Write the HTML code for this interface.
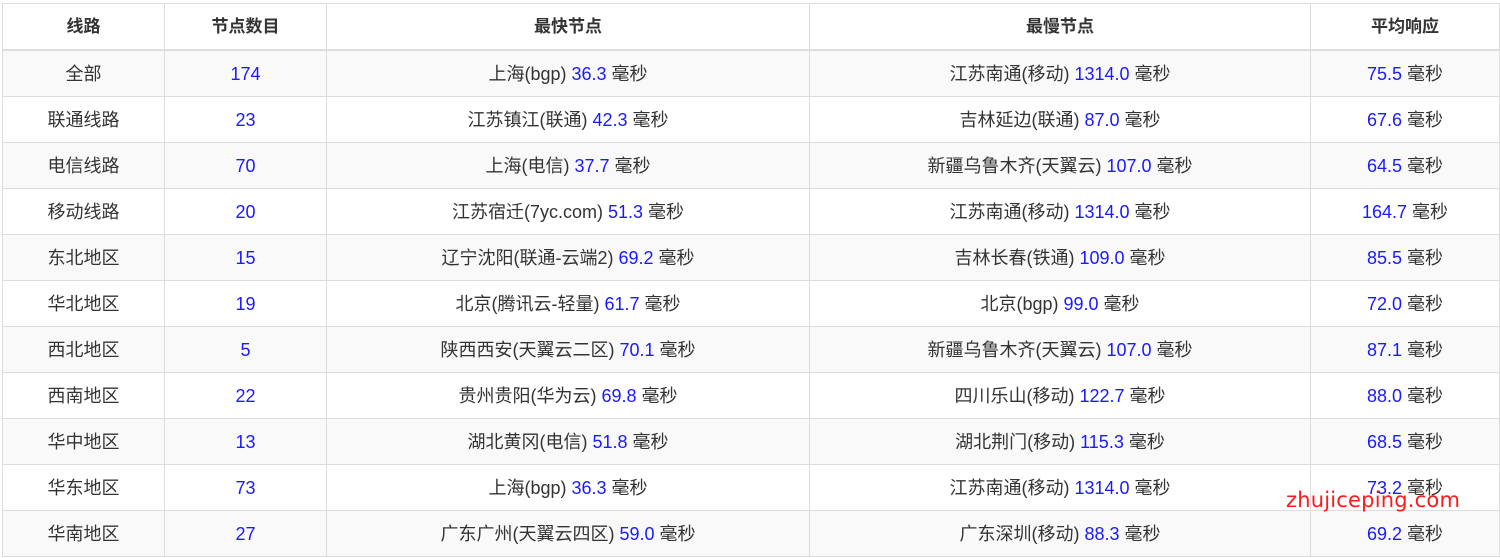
<!DOCTYPE html>
<html><head><meta charset="utf-8"><style>
body{margin:0;background:#fff;width:1500px;height:558px;overflow:hidden;position:relative;font-family:"Liberation Sans","Noto Sans CJK SC",sans-serif;}
table{position:absolute;left:2px;top:3px;border-collapse:collapse;table-layout:fixed;width:1497px;font-size:18px;color:#333;}
td,th{border:1px solid #ddd;text-align:center;height:45px;padding:0;line-height:20px;vertical-align:middle;}
th{font-weight:bold;height:45px;border-bottom:2px solid #ddd;font-size:17px;}
tr:nth-child(even) td{background:#f9f9f9;}
b{font-weight:normal;color:#1a1aff;line-height:20px;vertical-align:baseline;}
td>b:only-child{display:inline-block;padding-top:1px;}
.wm{position:absolute;left:1286px;top:488px;color:#ff1a1a;font-size:21px;font-family:"DejaVu Sans",sans-serif;letter-spacing:0.2px;}
</style></head><body>
<table>
<colgroup><col style="width:162px"><col style="width:162px"><col style="width:483px"><col style="width:501px"><col style="width:189px"></colgroup>
<tr><th>线路</th><th>节点数目</th><th>最快节点</th><th>最慢节点</th><th>平均响应</th></tr>
<tr><td>全部</td><td><b>174</b></td><td>上海(bgp) <b>36.3</b> 毫秒</td><td>江苏南通(移动) <b>1314.0</b> 毫秒</td><td><b>75.5</b> 毫秒</td></tr>
<tr><td>联通线路</td><td><b>23</b></td><td>江苏镇江(联通) <b>42.3</b> 毫秒</td><td>吉林延边(联通) <b>87.0</b> 毫秒</td><td><b>67.6</b> 毫秒</td></tr>
<tr><td>电信线路</td><td><b>70</b></td><td>上海(电信) <b>37.7</b> 毫秒</td><td>新疆乌鲁木齐(天翼云) <b>107.0</b> 毫秒</td><td><b>64.5</b> 毫秒</td></tr>
<tr><td>移动线路</td><td><b>20</b></td><td>江苏宿迁(7yc.com) <b>51.3</b> 毫秒</td><td>江苏南通(移动) <b>1314.0</b> 毫秒</td><td><b>164.7</b> 毫秒</td></tr>
<tr><td>东北地区</td><td><b>15</b></td><td>辽宁沈阳(联通-云端2) <b>69.2</b> 毫秒</td><td>吉林长春(铁通) <b>109.0</b> 毫秒</td><td><b>85.5</b> 毫秒</td></tr>
<tr><td>华北地区</td><td><b>19</b></td><td>北京(腾讯云-轻量) <b>61.7</b> 毫秒</td><td>北京(bgp) <b>99.0</b> 毫秒</td><td><b>72.0</b> 毫秒</td></tr>
<tr><td>西北地区</td><td><b>5</b></td><td>陕西西安(天翼云二区) <b>70.1</b> 毫秒</td><td>新疆乌鲁木齐(天翼云) <b>107.0</b> 毫秒</td><td><b>87.1</b> 毫秒</td></tr>
<tr><td>西南地区</td><td><b>22</b></td><td>贵州贵阳(华为云) <b>69.8</b> 毫秒</td><td>四川乐山(移动) <b>122.7</b> 毫秒</td><td><b>88.0</b> 毫秒</td></tr>
<tr><td>华中地区</td><td><b>13</b></td><td>湖北黄冈(电信) <b>51.8</b> 毫秒</td><td>湖北荆门(移动) <b>115.3</b> 毫秒</td><td><b>68.5</b> 毫秒</td></tr>
<tr><td>华东地区</td><td><b>73</b></td><td>上海(bgp) <b>36.3</b> 毫秒</td><td>江苏南通(移动) <b>1314.0</b> 毫秒</td><td><b>73.2</b> 毫秒</td></tr>
<tr><td>华南地区</td><td><b>27</b></td><td>广东广州(天翼云四区) <b>59.0</b> 毫秒</td><td>广东深圳(移动) <b>88.3</b> 毫秒</td><td><b>69.2</b> 毫秒</td></tr>
</table>
<div class="wm">zhujiceping.com</div>
</body></html>
